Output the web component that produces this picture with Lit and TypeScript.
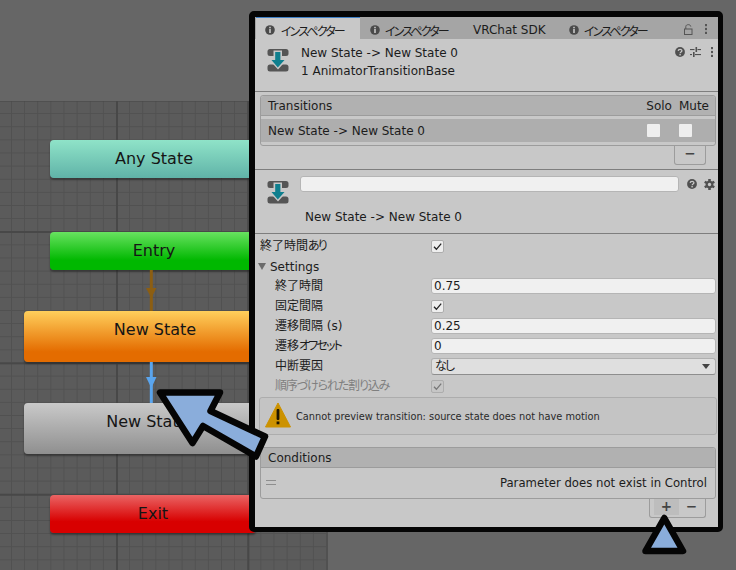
import { LitElement, html, css, svg } from "lit";
import { customElement } from "lit/decorators.js";

const transitionIcon = html`<svg class="ticon" viewBox="0 0 22 24" width="22" height="24">
  <rect x="0.5" y="1" width="21" height="7" rx="2.5" fill="#555"/>
  <rect x="0.5" y="16.5" width="21" height="7" rx="2.5" fill="#555"/>
  <path d="M2 11.5 H6.5 V2.5 H15 V11.5 H20 L11 21.5 Z" fill="#c8c8c8"/>
  <path d="M8.2 4 H13.4 V12 H17.5 L10.8 19.5 L4.5 12 H8.2 Z" fill="#0f7f8e"/>
</svg>`;

const info = html`<svg class="ii" viewBox="0 0 10 10" width="10" height="10"><circle cx="5" cy="5" r="4.8" fill="#4a4a4a"/><rect x="4.2" y="1.8" width="1.6" height="1.5" fill="#c8c8c8"/><rect x="4.2" y="4" width="1.6" height="4" fill="#c8c8c8"/></svg>`;
const help = html`<svg viewBox="0 0 10 10" width="10" height="10"><circle cx="5" cy="5" r="4.9" fill="#505050"/><path d="M3.2 3.9 C3.3 1.9 6.9 1.9 6.9 3.8 C6.9 5 5.1 4.9 5.1 6.3" fill="none" stroke="#c8c8c8" stroke-width="1.3"/><rect x="4.4" y="7" width="1.4" height="1.4" fill="#c8c8c8"/></svg>`;
const dots = html`<svg viewBox="0 0 2.5 10" width="2.5" height="10"><rect y="0" width="2.5" height="2.2" fill="#555"/><rect y="3.9" width="2.5" height="2.2" fill="#555"/><rect y="7.8" width="2.5" height="2.2" fill="#555"/></svg>`;
const sliders = html`<svg viewBox="0 0 11 10" width="11" height="10" fill="#505050"><rect x="0" y="2" width="4.5" height="1.1"/><rect x="7.5" y="2" width="3.5" height="1.1"/><rect x="5.5" y="0" width="1.6" height="5"/><rect x="0" y="7" width="2" height="1.1"/><rect x="5" y="7" width="6" height="1.1"/><rect x="3" y="5" width="1.6" height="5"/></svg>`;
const lock = html`<svg viewBox="0 0 9 11" width="9" height="11" fill="none" stroke="#555" stroke-width="1"><rect x="0.5" y="5" width="7.5" height="5.5"/><path d="M1.8 5 V2.6 C1.8 0 6.8 0 6.8 2.6"/></svg>`;
const gear = html`<svg viewBox="0 0 12 12" width="11" height="11"><g fill="#505050"><rect x="4.6" y="0" width="2.8" height="12"/><rect x="4.6" y="0" width="2.8" height="12" transform="rotate(60 6 6)"/><rect x="4.6" y="0" width="2.8" height="12" transform="rotate(120 6 6)"/><circle cx="6" cy="6" r="4.2"/></g><circle cx="6" cy="6" r="1.8" fill="#c8c8c8"/></svg>`;
const check = html`<svg viewBox="0 0 13 13" width="13" height="13"><path d="M3 6.8 L5.4 9.3 L10.2 3.6" fill="none" stroke="currentColor" stroke-width="1.3"/></svg>`;

const tab = (label: string, cls = "") => html`<div class="tab ${cls}">${info}<span class="k">${label}</span></div>`;

const canvasArrows = svg`
  <line x1="151.3" y1="270" x2="151.3" y2="311" stroke="#8c5e12" stroke-width="3"/>
  <path d="M146 288 H156.5 L151.3 298 Z" fill="#8c5e12"/>
  <line x1="151.3" y1="362" x2="151.3" y2="403" stroke="#5aa5ee" stroke-width="3"/>
  <path d="M146 377 H156.5 L151.3 388 Z" fill="#5aa5ee"/>`;

const overlayArrows = svg`
  <path d="M160 392.5 L220 392.5 L210.5 411 L265 436.5 L256 456.5 L203 426 L192.5 443 Z" fill="#8aaddb" stroke="#050505" stroke-width="6.5" stroke-linejoin="round"/>
  <path d="M664.3 518 L683 551 L645.5 551 Z" fill="#8aaddb" stroke="#050505" stroke-width="6.5" stroke-linejoin="round"/>`;

@customElement("app-root")
export class AppRoot extends LitElement {
  static styles = css`
    :host { display: block; width: 736px; height: 570px; position: relative; overflow: hidden; background: #666; font-family: "DejaVu Sans", sans-serif; color: #1c1c1c; }
    .canvas { position: absolute; left: 0; top: 101px; width: 327px; height: 469px; background-color: #5b5b5b;
      background-image:
        linear-gradient(to right, #484848 1.5px, transparent 1.5px),
        linear-gradient(to bottom, #484848 1.5px, transparent 1.5px),
        linear-gradient(to right, #515151 1px, transparent 1px),
        linear-gradient(to bottom, #515151 1px, transparent 1px);
      background-size: 131.4px 131.4px, 131.4px 131.4px, 13.14px 13.14px, 13.14px 13.14px;
      background-position: 116px 0, 0 130px, 11px 0, 0 -1px;
      border-right: 1px solid #515151; }
    .node { position: absolute; display: flex; align-items: center; justify-content: center; box-sizing: border-box; border-radius: 4px; font-size: 16px; color: #151515; box-shadow: 0 2px 2px rgba(0,0,0,.35); padding-bottom: 2px; }
    .n-any { left: 50px; top: 140px; width: 208px; height: 38px; background: linear-gradient(#8fe3c8, #60b3a8); }
    .n-entry { left: 50px; top: 232px; width: 208px; height: 38px; background: linear-gradient(#68e260, #00b800 75%); }
    .n-new { left: 24px; top: 311px; width: 262px; height: 51px; padding-bottom: 15px; background: linear-gradient(#ffcf5c, #e46c00 80%); }
    .n-gray { left: 24px; top: 403px; width: 262px; height: 51px; padding-bottom: 15px; background: linear-gradient(#c9c9c9, #8f8f8f); }
    .n-exit { left: 50px; top: 495px; width: 206px; height: 38px; background: linear-gradient(#ea6464, #d80000 70%); }
    .lines, .over { position: absolute; left: 0; top: 0; width: 736px; height: 570px; pointer-events: none; }

    .panel { position: absolute; left: 249px; top: 11px; width: 474px; height: 521px; box-sizing: border-box; border: solid #050505; border-width: 6px 5px 5px 6px; border-radius: 5px; background: #c8c8c8; display: flex; flex-direction: column; font-size: 12px; overflow: hidden; font-family: "DejaVu Sans", "Noto Sans CJK JP", sans-serif; font-feature-settings: "palt"; }
    .k { letter-spacing: -1.85px; }
    .k2 { letter-spacing: -1.15px; }
    .tabs { height: 22px; display: flex; background: #a5a5a5; flex: none; }
    .tab { display: flex; align-items: center; height: 22px; box-sizing: border-box; padding: 4px 0 0 10px; gap: 5px; width: 104px; white-space: nowrap; }
    .tab.on { background: #c8c8c8; border-top: 1px solid #3f7fc4; margin-left: 1px; padding: 3px 0 0 9px; gap: 6px; }
    .tab.sdk { width: 95px; padding-left: 9px; }
    .tab.last { width: auto; }
    .tabicons { margin-left: auto; display: flex; align-items: center; gap: 12px; padding: 2px 11px 0 0; }
    .hdr { height: 52px; flex: none; border-bottom: 1px solid #7e7e7e; display: flex; padding: 0 5px 0 12px; }
    .ticon { margin-top: 9px; flex: none; }
    .hdr-text { margin-left: 12px; padding-top: 5px; line-height: 18px; flex: 1; white-space: nowrap; }
    .hdr-icons { display: flex; padding-top: 8px; align-items: flex-start; }
    .hdr-icons > svg:nth-child(2) { margin: 0 10px 0 5px; }
    .list-wrap { height: 78px; flex: none; box-sizing: border-box; padding: 3px 2px 0 5px; border-bottom: 1px solid #7e7e7e; }
    .box { border: 1px solid #9c9c9c; border-radius: 3px; box-sizing: border-box; width: 456px; }
    .box-head { height: 19px; background: #b1b1b1; display: flex; align-items: center; padding-left: 7px; border-bottom: 1px solid #9c9c9c; border-radius: 3px 3px 0 0; }
    .box-head .solo { margin-left: auto; margin-right: 7px; }
    .box-head .mute { margin-right: 6px; }
    .t-body { height: 29px; box-sizing: border-box; padding-top: 3px; }
    .t-row { height: 23px; background: #aeaeae; display: flex; align-items: center; padding-left: 7px; }
    .t-row .cb { width: 13px; height: 13px; background: #eee; border-radius: 1px; }
    .t-row .c1 { margin-left: auto; margin-right: 19px; }
    .t-row .c2 { margin-right: 23px; }
    .foot { margin-left: auto; margin-right: 10px; display: flex; align-items: center; height: 19px; padding-bottom: 2px; border: 1px solid #9c9c9c; border-top: none; border-radius: 0 0 3px 3px; box-sizing: border-box; font-size: 13.5px; color: #444; font-weight: bold; }
    .foot.one { width: 32px; justify-content: center; }
    .foot.two { width: 57px; padding-left: 4px; }
    .foot .b { width: 25px; height: 16px; flex: none; display: flex; align-items: center; justify-content: center; line-height: 1; }
    .foot .hov { background: #bdbdbd; }
    .name-wrap { height: 64px; flex: none; box-sizing: border-box; border-bottom: 1px solid #7e7e7e; position: relative; display: flex; flex-direction: column; padding: 6px 6px 0 45px; }
    .name-top { display: flex; align-items: center; gap: 8px; height: 16px; }
    .name-input { width: 379px; height: 16px; box-sizing: border-box; background: #f0f0f0; border: 1px solid #b5b5b5; border-radius: 3px; flex: none; }
    .name-icons { display: flex; gap: 7px; align-items: center; }
    .name-label { margin-top: 18px; padding-left: 5px; white-space: nowrap; }
    .name-ic { position: absolute; left: 12px; top: 1px; }
    .props { flex: none; padding-top: 2px; }
    .row { height: 20px; display: flex; align-items: center; padding: 0 2px 0 5px; }
    .row.ind { padding-left: 20px; }
    .lbl { width: 156px; flex: none; white-space: nowrap; line-height: 16px; }
    .lbl.top { width: 171px; }
    .row.dim { color: #7f7f7f; }
    .cbx { width: 13px; height: 13px; box-sizing: border-box; background: #eee; border: 1px solid #adadad; border-radius: 2px; color: #222; display: flex; align-items: center; justify-content: center; flex: none; }
    .cbx svg { flex: none; }
    .dim .cbx { background: #c6c6c6; color: #777; }
    .field { flex: 1; height: 16px; box-sizing: border-box; background: #f0f0f0; border: 1px solid #b5b5b5; border-radius: 3px; padding-left: 2px; line-height: 15px; }
    .select { flex: 1; height: 17px; box-sizing: border-box; background: #dfdfdf; border: 1px solid #b0b0b0; border-bottom-color: #8e8e8e; border-radius: 3px; padding: 0 5px 0 3px; display: flex; align-items: center; justify-content: space-between; line-height: 15px; }
    .caret { width: 0; height: 0; border-left: 4px solid transparent; border-right: 4px solid transparent; border-top: 5px solid #444; }
    .settings { height: 20px; display: flex; align-items: center; padding: 1px 0 0 3px; gap: 4px; box-sizing: border-box; }
    .tri { width: 0; height: 0; border-left: 4px solid transparent; border-right: 4px solid transparent; border-top: 7px solid #6b6b6b; }
    .helpbox { margin: 1px 1px 0 4px; height: 38px; box-sizing: border-box; border: 1px solid #adadad; border-radius: 3px; background: #c4c4c4; display: flex; align-items: center; gap: 5px; padding-left: 5px; font-size: 9.8px; color: #2a2a2a; white-space: nowrap; flex: none; }
    .helpbox svg { margin-top: -2px; }
    .cond { margin: 12px 2px 0 5px; }
    .cond-body { height: 30px; display: flex; align-items: center; justify-content: flex-end; padding-right: 8px; position: relative; font-size: 11.7px; }
    .eq { position: absolute; left: 5px; top: 12px; width: 10px; height: 5px; border-top: 1px solid #8e8e8e; border-bottom: 1px solid #8e8e8e; box-sizing: border-box; }
  `;

  render() {
    const row = (label: unknown, control: unknown, cls = "") => html`<div class="row ind ${cls}"><div class="lbl">${label}</div>${control}</div>`;
    const cb = html`<div class="cbx">${check}</div>`;
    return html`
      <div class="canvas"></div>
      <div class="node n-any">Any State</div>
      <div class="node n-entry">Entry</div>
      <div class="node n-new">New State</div>
      <div class="node n-gray">New State 0</div>
      <div class="node n-exit">Exit</div>
      <svg class="lines" viewBox="0 0 736 570">${canvasArrows}</svg>
      <div class="panel">
        <div class="tabs">
          ${tab("インスペクター", "on")}
          ${tab("インスペクター")}
          <div class="tab sdk"><span>VRChat SDK</span></div>
          ${tab("インスペクター", "last")}
          <div class="tabicons">${lock}${dots}</div>
        </div>
        <div class="hdr">
          ${transitionIcon}
          <div class="hdr-text"><div>New State -&gt; New State 0</div><div>1 AnimatorTransitionBase</div></div>
          <div class="hdr-icons">${help}${sliders}${dots}</div>
        </div>
        <div class="list-wrap">
          <div class="box">
            <div class="box-head"><span>Transitions</span><span class="solo">Solo</span><span class="mute">Mute</span></div>
            <div class="t-body"><div class="t-row"><span>New State -&gt; New State 0</span><div class="cb c1"></div><div class="cb c2"></div></div></div>
          </div>
          <div class="foot one"><div class="b">−</div></div>
        </div>
        <div class="name-wrap">
          <div class="name-ic">${transitionIcon}</div>
          <div class="name-top"><div class="name-input"></div><div class="name-icons">${help}${gear}</div></div>
          <div class="name-label">New State -&gt; New State 0</div>
        </div>
        <div class="props">
          <div class="row"><div class="lbl top">終了時間<span class="k">あり</span></div>${cb}</div>
          <div class="settings"><div class="tri"></div><span>Settings</span></div>
          ${row("終了時間", html`<div class="field">0.75</div>`)}
          ${row("固定間隔", cb)}
          ${row("遷移間隔 (s)", html`<div class="field">0.25</div>`)}
          ${row(html`遷移<span class="k">オフセット</span>`, html`<div class="field">0</div>`)}
          ${row("中断要因", html`<div class="select"><span class="k">なし</span><div class="caret"></div></div>`)}
          ${row(html`<span class="k2">順序づけられた割り込み</span>`, cb, "dim")}
        </div>
        <div class="helpbox">
          <svg viewBox="0 0 26 26" width="26" height="26"><path d="M13 1 L25.5 25 H0.5 Z" fill="#cc9200" stroke="#cc9200" stroke-linejoin="round"/><rect x="11.6" y="7" width="2.8" height="11" rx="1" fill="#1d1500"/><rect x="11.6" y="19.5" width="2.8" height="2.8" fill="#1d1500"/></svg>
          <span>Cannot preview transition: source state does not have motion</span>
        </div>
        <div class="cond">
          <div class="box">
            <div class="box-head"><span>Conditions</span></div>
            <div class="cond-body"><div class="eq"></div><span>Parameter does not exist in Control</span></div>
          </div>
          <div class="foot two"><div class="b hov">+</div><div class="b">−</div></div>
        </div>
      </div>
      <svg class="over" viewBox="0 0 736 570">${overlayArrows}</svg>
    `;
  }
}
